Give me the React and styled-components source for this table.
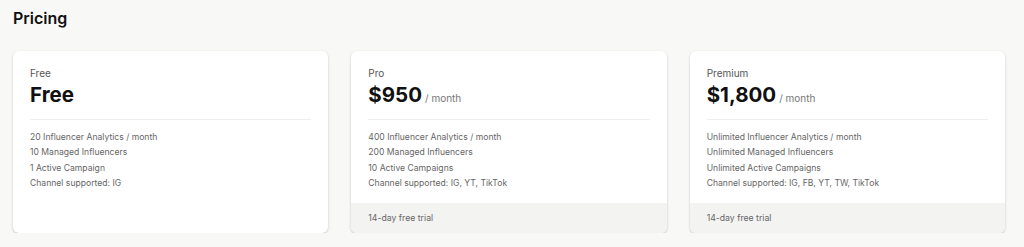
import React from "react";
import styled, { createGlobalStyle } from "styled-components";

const GlobalStyle = createGlobalStyle`
  body {
    margin: 0;
    background-color: #f8f8f7;
    font-family: Inter, "Noto Sans", sans-serif;
  }
`;

const Page = styled.div`
  padding: 7px 19px 0 13px;
`;

const Heading = styled.h1`
  margin: 0;
  font-size: 16px;
  line-height: 22px;
  font-weight: 600;
  color: #111;
`;

const Grid = styled.div`
  display: grid;
  grid-template-columns: repeat(3, 1fr);
  gap: 23px;
  margin-top: 22px;
`;

const Card = styled.div`
  display: flex;
  flex-direction: column;
  height: 182px;
  background: #fff;
  border-radius: 6px;
  box-shadow: 0 1px 3px rgba(0, 0, 0, 0.16), 0 1px 2px rgba(0, 0, 0, 0.06);
  overflow: hidden;
`;

const Body = styled.div`
  padding: 14px 17px 0 17px;
`;

const Label = styled.div`
  font-size: 10px;
  line-height: 16px;
  color: #555;
`;

const PriceRow = styled.div`
  display: flex;
  align-items: baseline;
  gap: 3px;
  height: 28px;
  line-height: 28px;
`;

const Price = styled.span`
  font-size: 20.5px;
  font-weight: 700;
  color: #111;
`;

const Period = styled.span`
  font-size: 10px;
  color: #777;
`;

const Divider = styled.hr`
  border: 0;
  border-top: 1px solid #eeeeec;
  margin: 10px 0;
`;

const Features = styled.ul`
  list-style: none;
  margin: 0;
  padding: 0;
`;

const Feature = styled.li`
  font-size: 8.6px;
  line-height: 15.3px;
  color: #666;
`;

const Footer = styled.div`
  margin-top: auto;
  height: 30px;
  display: flex;
  align-items: center;
  padding: 0 17px;
  background: #f3f3f2;
  font-size: 8.7px;
  color: #666;
`;

const plans = [
  {
    label: "Free",
    price: "Free",
    period: null,
    features: [
      "20 Influencer Analytics / month",
      "10 Managed Influencers",
      "1 Active Campaign",
      "Channel supported: IG",
    ],
    trial: null,
  },
  {
    label: "Pro",
    price: "$950",
    period: "/ month",
    features: [
      "400 Influencer Analytics / month",
      "200 Managed Influencers",
      "10 Active Campaigns",
      "Channel supported: IG, YT, TikTok",
    ],
    trial: "14-day free trial",
  },
  {
    label: "Premium",
    price: "$1,800",
    period: "/ month",
    features: [
      "Unlimited Influencer Analytics / month",
      "Unlimited Managed Influencers",
      "Unlimited Active Campaigns",
      "Channel supported: IG, FB, YT, TW, TikTok",
    ],
    trial: "14-day free trial",
  },
];

const App = () => {
  return (
    <>
      <GlobalStyle />
      <Page>
        <Heading>Pricing</Heading>
        <Grid>
          {plans.map((plan) => (
            <Card key={plan.label}>
              <Body>
                <Label>{plan.label}</Label>
                <PriceRow>
                  <Price>{plan.price}</Price>
                  {plan.period && <Period>{plan.period}</Period>}
                </PriceRow>
                <Divider />
                <Features>
                  {plan.features.map((f) => (
                    <Feature key={f}>{f}</Feature>
                  ))}
                </Features>
              </Body>
              {plan.trial && <Footer>{plan.trial}</Footer>}
            </Card>
          ))}
        </Grid>
      </Page>
    </>
  );
};

export default App;
